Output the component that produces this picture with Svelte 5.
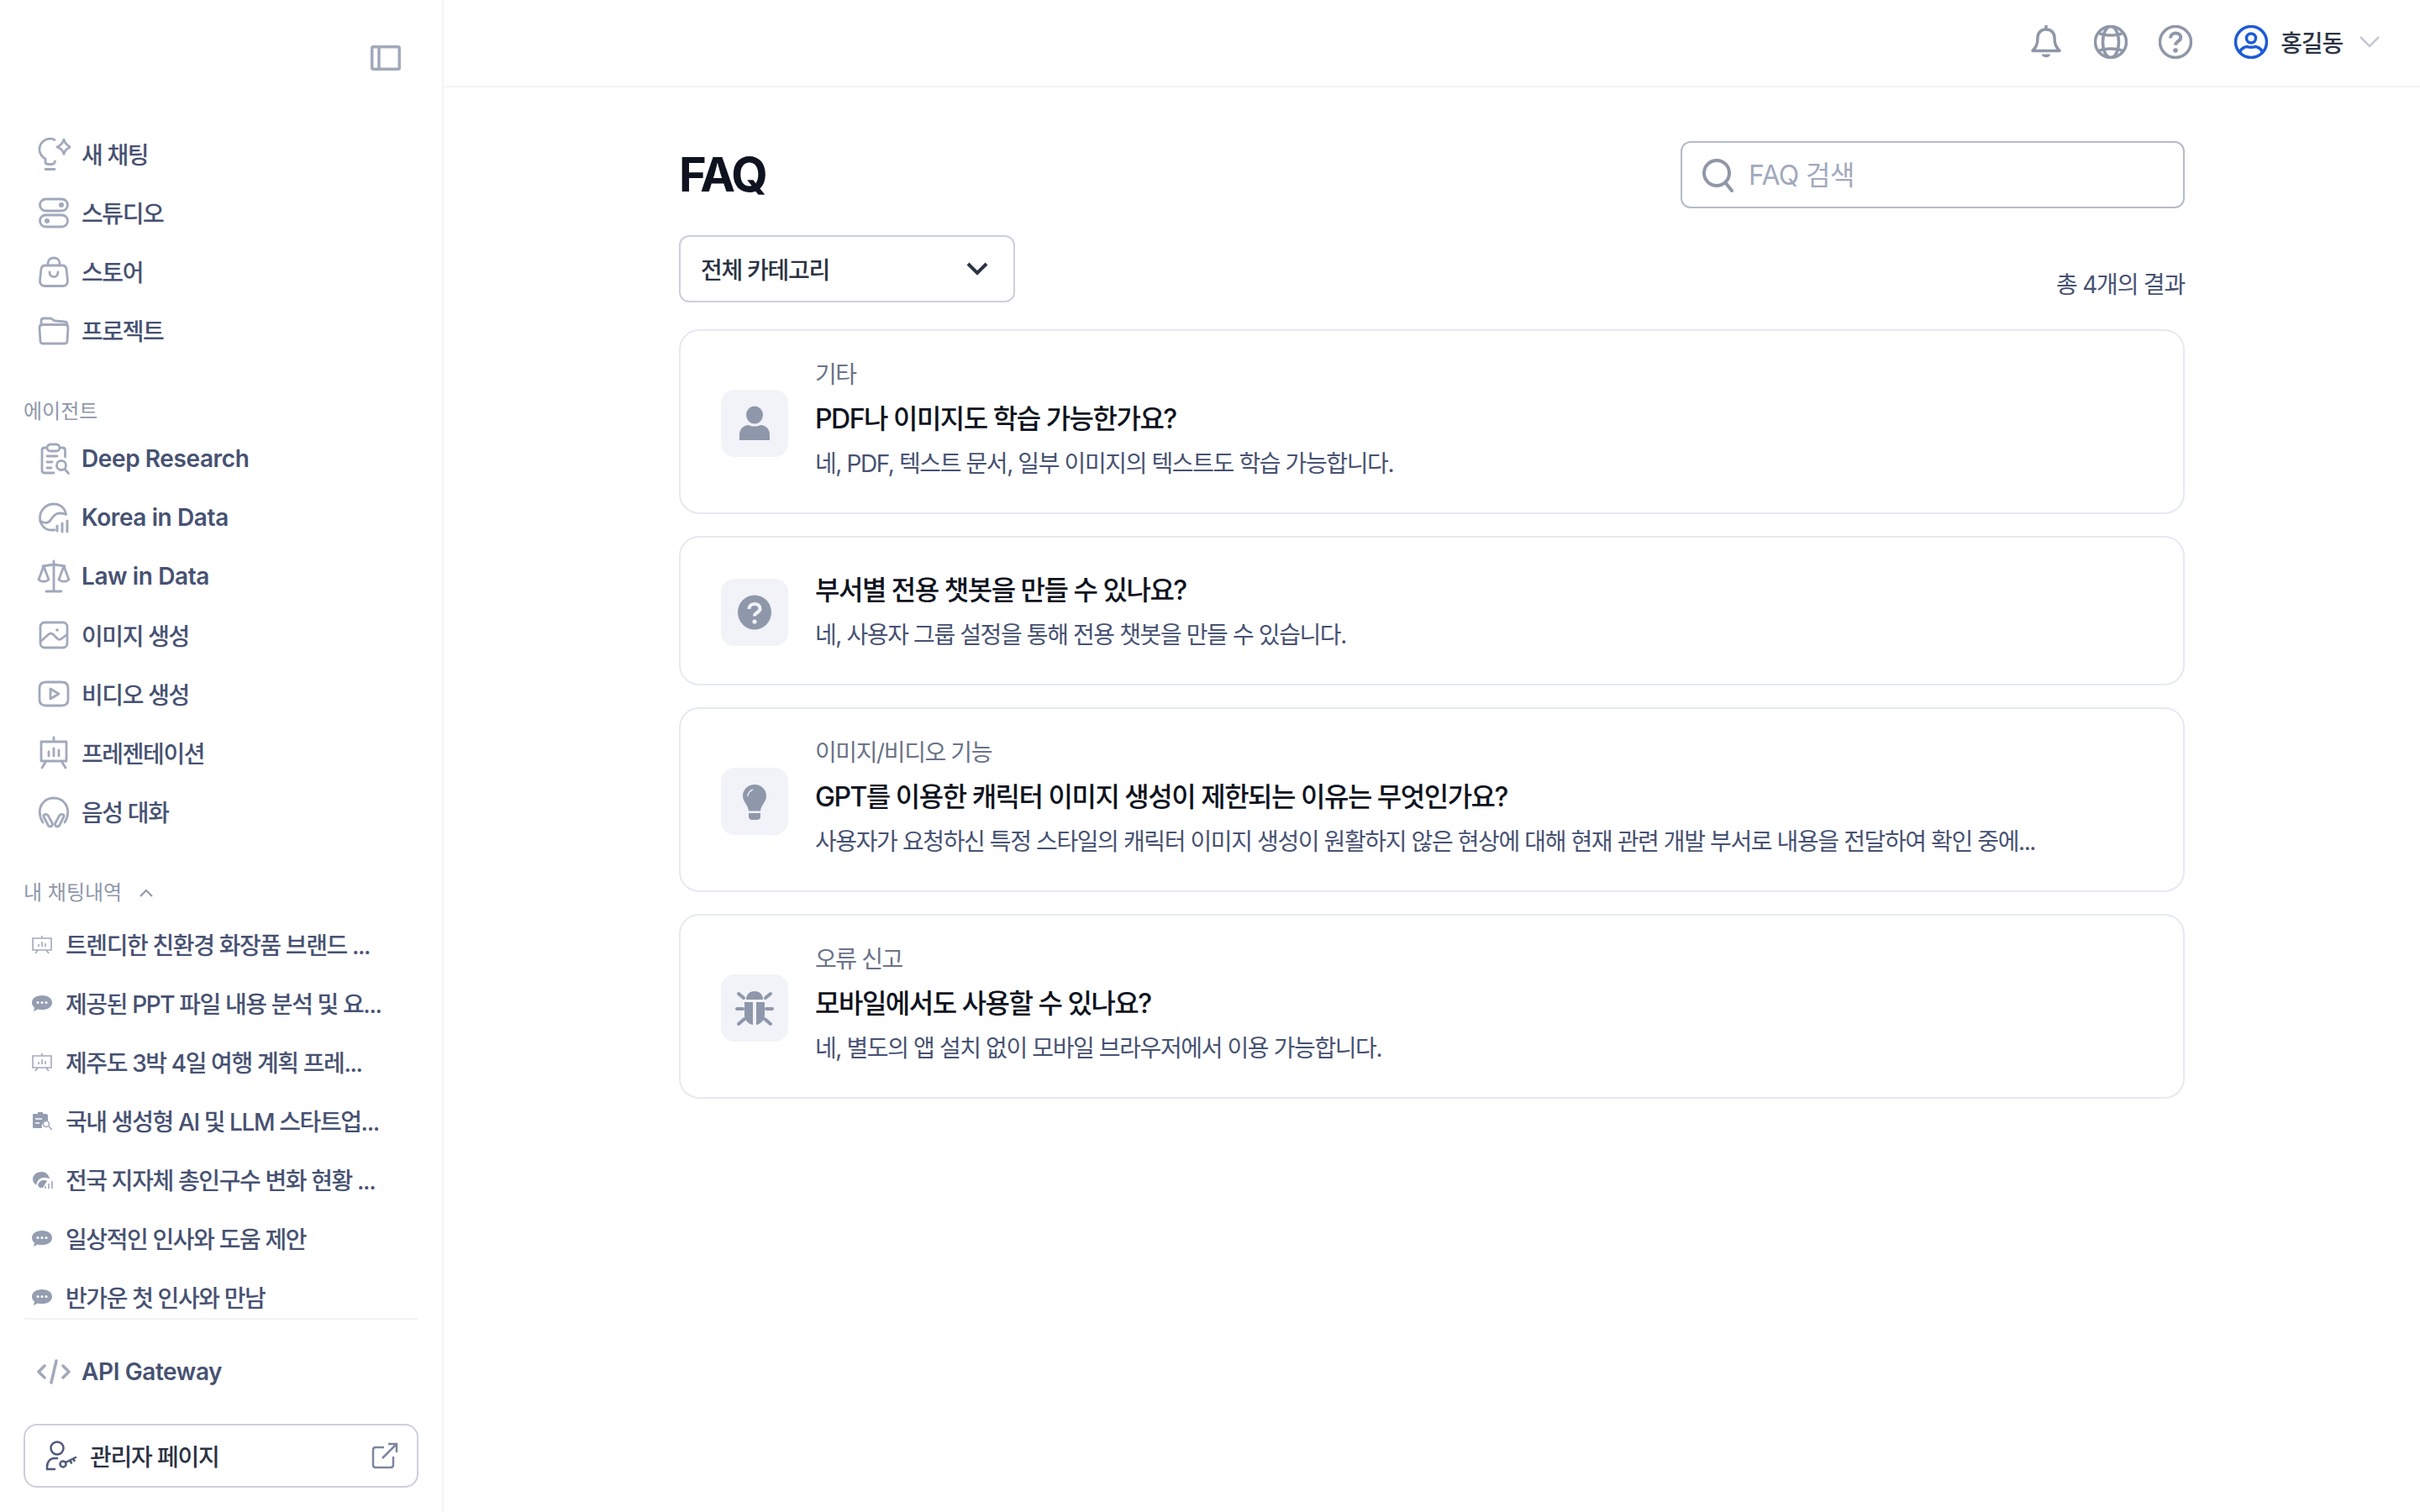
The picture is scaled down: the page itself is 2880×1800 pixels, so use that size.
<script>
  const icons = {
    bulb: '<path d="M21 3.500A12.500 12.500 0 0 0 10 26v3.500c0 2 1 3 3 3h5c2 0 3-1 3.500-3.500M10 38.500h11"/><path d="M32 3c1 4.500 3.500 7 8 9-4.500 1.500-7 4-8 8.500-1-4.500-3.500-7-8-8.500 4.500-2 7-4.500 8-9z"/>',
    studio: '<rect x="3.500" y="4" width="33" height="14" rx="7"/><rect x="3.500" y="23" width="33" height="14" rx="7"/><circle cx="29" cy="11" r="3" class="solid"/><circle cx="12" cy="30" r="3" class="solid"/>',
    bag: '<path d="M10 13h20c3 0 4.500 1.500 5 4l1.500 14c.3 4-2 6.500-6 6.500h-21c-4 0-6.300-2.500-6-6.500L5 17c.5-2.500 2-4 5-4z"/><path d="M13 13v-2.500C13 6.500 16 4 20 4s7 2.500 7 6.500V13M15 21c0 7.500 10 7.500 10 0"/>',
    folder: '<path d="M5 13V9c0-2 1-3 3-3h8c2.500 0 3 2.500 5.500 3L33 10c2 0 3 1.500 3 3.500"/><path d="M3 17c0-2.500 1.500-3.500 4-3.500h26c2.500 0 4 1 4 3.500l-1 16c-.1 2-1.500 3-3 3H7c-1.500 0-2.900-1-3-3z"/>',
    research: '<path d="M11 7H9c-2 0-3 1-3 3v24c0 2 1 3 3 3h11M29 7h1.500c2 0 3 1 3 3v8"/><rect x="12" y="3" width="15" height="8" rx="4"/><path d="M12 17h12M12 24h6M12 31h5"/><circle cx="29" cy="28" r="5.500"/><path d="M33 32.500l4.500 5"/>',
    wave: '<path d="M21 35H17C9 35 3.500 28 3.500 20.500 3.500 11 11 4 20 4c8 0 13.500 5 14.500 12.500"/><path d="M4 24c5 4 10 3 13-2 3-5 7-9 17-6"/><path d="M24 36v-6M30 37V27M36 37V24" stroke-width="3"/>',
    scale: '<path d="M20 2v36M11 38h18M7 8l13-2 13 2"/><path d="M8 8L2 24c3 3 9 3 12 0zM32 8l-6 16c3 3 9 3 12 0z"/>',
    image: '<rect x="4" y="5" width="32" height="30" rx="5"/><path d="M5 27l9-8c2-1.500 3-1.500 5 0l5 5c2 2 3 2 5 .5l6-4.500"/><circle cx="24" cy="14" r="1.800" class="solid"/>',
    video: '<path d="M11 6h18c5 0 8 2 8 7v14c0 5-3 7-8 7H11c-5 0-8-2-8-7V13c0-5 3-7 8-7z"/><path d="M16 14v12l10-6z"/>',
    slides: '<path d="M5 7h30v23H5zM20 2v5M11 30l-5 8M29 30l5 8M14 24v-5M20 24v-9M26 24v-7"/>',
    phones: '<path d="M7 33C2 25 2 16 7 10 13 2 27 2 33 10c5 6 5 15 0 23"/>' + '<path d="M8 26l5 10c1 2 3 2.500 4.500 1.500 1-1 1.500-2 .5-4l-5-9c-1.500-2-6-1-5 1.500zM32 26l-5 10c-1 2-3 2.500-4.500 1.500-1-1-1.500-2-.5-4l5-9c1.500-2 6-1 5 1.500z"/>',
    code: '<path d="M9 13L2 20l7 7M31 13l7 7-7 7M23 7l-6 26" stroke-width="3.500"/>'
  }

  const mainNav = [
    ['bulb', '새 채팅'], ['studio', '스튜디오'], ['bag', '스토어'], ['folder', '프로젝트']
  ]
  const agents = [
    ['research', 'Deep Research'], ['wave', 'Korea in Data'], ['scale', 'Law in Data'], ['image', '이미지 생성'],
    ['video', '비디오 생성'], ['slides', '프레젠테이션'], ['phones', '음성 대화']
  ]
  const chats = [
    ['slides', '트렌디한 친환경 화장품 브랜드 ...'],
    ['bubble', '제공된 PPT 파일 내용 분석 및 요...'],
    ['slides', '제주도 3박 4일 여행 계획 프레...'],
    ['clip', '국내 생성형 AI 및 LLM 스타트업...'],
    ['globe', '전국 지자체 총인구수 변화 현황 ...'],
    ['bubble', '일상적인 인사와 도움 제안'],
    ['bubble', '반가운 첫 인사와 만남']
  ]
  const faqs = [
    { icon: 'person', cat: '기타', q: 'PDF나 이미지도 학습 가능한가요?', a: '네, PDF, 텍스트 문서, 일부 이미지의 텍스트도 학습 가능합니다.' },
    { icon: 'help', cat: '', q: '부서별 전용 챗봇을 만들 수 있나요?', a: '네, 사용자 그룹 설정을 통해 전용 챗봇을 만들 수 있습니다.' },
    { icon: 'light', cat: '이미지/비디오 기능', q: 'GPT를 이용한 캐릭터 이미지 생성이 제한되는 이유는 무엇인가요?', a: '사용자가 요청하신 특정 스타일의 캐릭터 이미지 생성이 원활하지 않은 현상에 대해 현재 관련 개발 부서로 내용을 전달하여 확인 중에...' },
    { icon: 'bug', cat: '오류 신고', q: '모바일에서도 사용할 수 있나요?', a: '네, 별도의 앱 설치 없이 모바일 브라우저에서 이용 가능합니다.' }
  ]

  const isLatin = (s) => /^[A-Za-z ]+$/.test(s)
</script>

{#snippet navRow(item)}
  <a class="row" class:latin={isLatin(item[1])} href="#top">
    <svg class="ico" viewBox="0 0 40 40">{@html icons[item[0]]}</svg>
    <span>{item[1]}</span>
  </a>
{/snippet}

<div class="layout" id="top">
  <aside>
    <div class="toggle">
      <svg width="36" height="30" viewBox="0 0 36 30" fill="none" stroke="#a2a9bc" stroke-width="3.500"><rect x="1.750" y="1.750" width="32.500" height="26.500" rx="1.500"/><path d="M10 2v26" /></svg>
    </div>
    <nav class="first">
      {#each mainNav as item}{@render navRow(item)}{/each}
    </nav>
    <div class="label">에이전트</div>
    <nav>
      {#each agents as item}{@render navRow(item)}{/each}
    </nav>
    <div class="label hist">내 채팅내역
      <svg width="18" height="10" viewBox="0 0 18 10" fill="none" stroke="#8f97ab" stroke-width="2"><path d="M2 9l7-7 7 7"/></svg>
    </div>
    <div class="chats">
      {#each chats as c}
        <a class="chat" href="#top">
          <svg viewBox="0 0 26 26" class="mini">
            {#if c[0] === 'slides'}
              <path class="ol" d="M2 6h22v14H2zM13 3v3M8 20l-3 4M18 20l3 4M9 16v-3M13 16v-6M17 16v-4"/>
            {:else if c[0] === 'bubble'}
              <path d="M13 4C6 4 1 7.500 1 12.500c0 2.500 1 4.500 3 6L3 23l5-2.500c1.500.4 3.200.6 5 .6 7 0 12-3.600 12-8.600S20 4 13 4z"/>
              <circle cx="8" cy="12.500" r="1.500" fill="#fff"/><circle cx="13" cy="12.500" r="1.500" fill="#fff"/><circle cx="18" cy="12.500" r="1.500" fill="#fff"/>
            {:else if c[0] === 'clip'}
              <path d="M3 5h5V3h6v2h4c1 0 2 1 2 2v6a7 7 0 0 0-7 9H3c-1 0-1-1-1-1V6c0-1 0-1 1-1z"/>
              <path class="cut" d="M5 11h8M5 16h5"/>
              <circle class="ol" cx="18" cy="17" r="3.500"/><path class="ol" d="M21 20l4 4"/>
            {:else}
              <path d="M13 4C6 4 2 8 2 13c0 3 2 5 4 7 1-5 4-9 9-9 2 0 5 .5 7 1-1-5-5-8-9-8z"/>
              <path d="M8 20c1-4 4-6 7-6 2 0 3 .5 4 1l-5 8h-3c-1 0-2-1-3-3z"/>
              <path class="ol" d="M17 24v-3M21 24v-6M25 24v-9"/>
            {/if}
          </svg>
          <span>{c[1]}</span>
        </a>
      {/each}
    </div>
    <nav class="api">{@render navRow(['code', 'API Gateway'])}</nav>
    <a class="admin" href="#top">
      <svg width="40" height="40" viewBox="0 0 40 40" fill="none" stroke="#4f5a78" stroke-width="2.500" stroke-linecap="round"><circle cx="16" cy="11" r="7.500"/><path d="M4 36v-3c0-6 4-10 9-10h3"/><path d="M4 36h9"/><circle cx="23" cy="30" r="3.500"/><path d="M26 28l12-6M31 25.500l2 3M35 23.500l1.500 2.500"/></svg>
      <span>관리자 페이지</span>
      <svg class="ext" width="32" height="32" viewBox="0 0 32 32" fill="none" stroke="#7d869f" stroke-width="2.500"><path d="M15 6H5c-2 0-3 1-3 3v18c0 2 1 3 3 3h18c2 0 3-1 3-3V17M13 19L30 2M20 2h10v10"/></svg>
    </a>
  </aside>

  <div class="content">
    <header>
      <svg class="hi" viewBox="0 0 40 40" fill="none" stroke="#8f97a8" stroke-width="3.500" stroke-linejoin="round"><path d="M20 5c-6.500 0-10 4.500-10 10 0 8-2 11-6 15.500h32c-4-4.500-6-7.500-6-15.500 0-5.500-3.500-10-10-10z"/><path d="M20 1v4" stroke-linecap="round"/><path d="M15 34.500h10c0 5-10 5-10 0z" fill="#8f97a8" stroke="none"/></svg>
      <svg class="hi" viewBox="0 0 40 40" fill="none" stroke="#8f97a8" stroke-width="3.500"><circle cx="20" cy="20" r="18.500"/><ellipse cx="20" cy="20" rx="9.500" ry="18.500"/><path d="M5 9c8 4 22 4 30 0M5 31c8-4 22-4 30 0"/></svg>
      <svg class="hi" viewBox="0 0 40 40" fill="none" stroke="#8f97a8" stroke-width="3.500"><circle cx="20" cy="20" r="18.500"/><path d="M14 15.500c0-4 3-6 6.200-6 3.500 0 6 2 6 5.200 0 4.500-6 4.500-6 9" stroke-width="4"/><circle cx="20" cy="30" r="2.800" fill="#8f97a8" stroke="none"/></svg>
      <div class="user">
        <svg width="40" height="40" viewBox="0 0 40 40" fill="none" stroke="#1d5bd6" stroke-width="3.500"><circle cx="20" cy="20" r="18.500"/><circle cx="20" cy="15.500" r="5.500"/><path d="M6.500 32c2-5 7-6.500 9-6.500 2 1 7 1 9 0 2 0 7 1.500 9 6.500"/></svg>
        <span>홍길동</span>
        <svg width="24" height="14" viewBox="0 0 24 14" fill="none" stroke="#c4c9d4" stroke-width="2.500"><path d="M1 1l11 11L23 1"/></svg>
      </div>
    </header>

    <main>
      <div class="head">
        <h1>FAQ</h1>
        <div class="search">
          <svg width="42" height="42" viewBox="0 0 42 42" fill="none" stroke="#8f97a8" stroke-width="4" stroke-linecap="round"><circle cx="19" cy="19" r="15"/><path d="M29 30l8 10"/></svg>
          <input placeholder="FAQ 검색" />
        </div>
      </div>
      <div class="filter">
        <div class="select">
          <span>전체 카테고리</span>
          <svg width="26" height="16" viewBox="0 0 26 16" fill="none" stroke="#2b3344" stroke-width="4"><path d="M2 2l11 11L24 2"/></svg>
        </div>
        <span class="count">총 4개의 결과</span>
      </div>
      <div class="cards">
        {#each faqs as f}
          <article>
            <div class="tile">
              <svg viewBox="0 0 80 80" width="80" height="80" fill="#8f97ab">
                {#if f.icon === 'person'}
                  <ellipse cx="40" cy="30" rx="10" ry="10.500"/>
                  <path d="M22 60V53c0-7 6-11 11-11 4 2 10 2 14 0 5 0 11 4 11 11v7z"/>
                {:else if f.icon === 'help'}
                  <ellipse cx="40" cy="40" rx="20" ry="20.500"/>
                  <path d="M33.500 36c0-4 3-6 6.500-6s6.500 2 6.500 5.500c0 5-6.500 4.500-6.500 9" fill="none" stroke="#f1f3f9" stroke-width="4"/>
                  <circle cx="40" cy="51" r="2.600" fill="#f1f3f9"/>
                {:else if f.icon === 'light'}
                  <path d="M40 20c-8 0-14 6-14 13.500 0 7 6 10 7 18h14c1-8 7-11 7-18C54 26 48 20 40 20z"/>
                  <path d="M33 54h14v4c0 3-2 4-4 4h-6c-2 0-4-1-4-4z"/>
                  <path d="M32 34c0-4 3-7 6-8" fill="none" stroke="#f1f3f9" stroke-width="1.500"/>
                {:else}
                  <path d="M30 30c0-6 4-10 10-10s10 4 10 10z"/>
                  <path d="M28 33h10v27c-6-1-10-6-10-12zM42 33h10v15c0 6-4 11-10 12z"/>
                  <path d="M27 28l-6-5M53 28l6-5M26 41h-7M54 41h7M28 53l-7 6M52 53l7 6" fill="none" stroke="#8f97ab" stroke-width="4" stroke-linecap="round"/>
                {/if}
              </svg>
            </div>
            <div class="body">
              {#if f.cat}<div class="cat">{f.cat}</div>{/if}
              <h2>{f.q}</h2>
              <p>{f.a}</p>
            </div>
          </article>
        {/each}
      </div>
    </main>
  </div>
</div>

<style>
  :global(body) {
    margin: 0;
    background: #fff;
    font-family: Inter, "Noto Sans CJK KR", sans-serif;
  }
  .layout {
    display: flex;
    height: 1800px;
    overflow: hidden;
  }
  aside {
    width: 528px;
    flex: none;
    box-sizing: border-box;
    border-right: 2px solid #f3f4f9;
    padding: 0 28px 0 28px;
  }
  .toggle {
    display: flex;
    justify-content: flex-end;
    padding: 54px 21px 0 0;
    height: 94px;
    box-sizing: border-box;
  }
  .toggle svg { display: block; }
  nav.first { margin-top: 54px; }
  .row {
    display: flex;
    align-items: center;
    gap: 13px;
    height: 70px;
    padding-left: 16px;
    color: #475272;
    font-size: 28px;
    font-weight: 500;
    letter-spacing: -1.4px;
    text-decoration: none;
  }
  .row.latin {
    font-weight: 600;
    letter-spacing: -0.4px;
  }
  .ico {
    width: 40px;
    height: 40px;
    flex: none;
    fill: none;
    stroke: #a2a9bc;
    stroke-width: 2.8;
    stroke-linecap: round;
    stroke-linejoin: round;
  }
  .ico :global(.solid) { fill: #a2a9bc; stroke: none; }
  .label {
    margin: 44px 0 3px;
    height: 36px;
    line-height: 36px;
    font-size: 24px;
    color: #8f97ab;
  }
  .hist {
    margin-bottom: 8px;
    display: flex;
    align-items: center;
    gap: 20px;
  }
  .chats {
    height: 480px;
    overflow: hidden;
    border-bottom: 2px solid #f3f4f9;
  }
  .chat {
    display: flex;
    align-items: center;
    gap: 15px;
    height: 70px;
    padding-left: 9px;
    color: #475272;
    font-size: 28px;
    font-weight: 500;
    letter-spacing: -1.4px;
    white-space: nowrap;
    text-decoration: none;
  }
  .mini {
    width: 26px;
    height: 26px;
    flex: none;
    fill: #959db1;
  }
  .mini .ol {
    fill: none;
    stroke: #a2a9bc;
    stroke-width: 1.6;
  }
  .mini .cut {
    fill: none;
    stroke: #fff;
    stroke-width: 1.6;
  }
  .api { margin-top: 27px; }
  .admin {
    margin-top: 27px;
    display: flex;
    align-items: center;
    height: 76px;
    box-sizing: border-box;
    border: 2px solid #ccd0dc;
    border-radius: 16px;
    padding: 0 22px;
    color: #2b3344;
    font-size: 28px;
    font-weight: 500;
    letter-spacing: -1.2px;
    text-decoration: none;
  }
  .admin span { margin-left: 15px; flex: 1; }
  .content {
    flex: 1;
    min-width: 0;
  }
  header {
    height: 104px;
    box-sizing: border-box;
    border-bottom: 2px solid #f3f4f9;
    display: flex;
    align-items: center;
    justify-content: flex-end;
    gap: 37px;
    padding: 0 48px 2px 0;
  }
  .hi { width: 40px; height: 40px; }
  .user {
    display: flex;
    align-items: center;
    margin-left: 13px;
    font-size: 28px;
    font-weight: 500;
    letter-spacing: -1.2px;
    color: #2b3344;
  }
  .user span { margin: 0 20px 0 15px; }
  main {
    width: 1792px;
    margin: 0 auto;
    padding-top: 64px;
  }
  .head {
    display: flex;
    justify-content: space-between;
    align-items: center;
  }
  h1 {
    margin: 0;
    font-size: 56px;
    font-weight: 700;
    color: #0f1320;
    letter-spacing: -2.5px;
  }
  .search {
    width: 600px;
    height: 80px;
    box-sizing: border-box;
    border: 2px solid #b5bbc9;
    border-radius: 12px;
    display: flex;
    align-items: center;
    padding-left: 22px;
    gap: 13px;
  }
  .search input {
    border: none;
    outline: none;
    flex: 1;
    min-width: 0;
    font: inherit;
    font-size: 32px;
    letter-spacing: -0.6px;
    color: #2b3344;
  }
  .search input::placeholder { color: #a2a9bc; }
  .filter {
    margin-top: 32px;
    display: flex;
    justify-content: space-between;
    align-items: flex-end;
  }
  .select {
    width: 400px;
    height: 80px;
    box-sizing: border-box;
    border: 2px solid #ccd0dc;
    border-radius: 12px;
    display: flex;
    align-items: center;
    justify-content: space-between;
    padding: 0 30px 0 24px;
    font-size: 28px;
    font-weight: 500;
    letter-spacing: -1.3px;
    color: #2b3344;
  }
  .count {
    font-size: 28px;
    letter-spacing: -1.2px;
    color: #475272;
    padding-bottom: 3px;
  }
  .cards {
    margin-top: 32px;
    display: flex;
    flex-direction: column;
    gap: 26px;
  }
  article {
    border: 2px solid #e6e9f2;
    border-radius: 24px;
    padding: 39px 48px 36px;
    display: flex;
    align-items: center;
    gap: 32px;
  }
  .tile {
    width: 80px;
    height: 80px;
    flex: none;
    border-radius: 16px;
    background: #f1f3f9;
  }
  .tile svg { display: block; }
  .body { min-width: 0; }
  .cat {
    font-size: 28px;
    line-height: 26px;
    letter-spacing: -1.4px;
    margin-bottom: 16px;
    color: #6b7388;
  }
  h2 {
    margin: 0;
    font-size: 32px;
    line-height: 48px;
    font-weight: 500;
    letter-spacing: -1.5px;
    color: #0f1320;
  }
  p {
    margin: 7px 0 0;
    font-size: 28px;
    line-height: 44px;
    letter-spacing: -1.4px;
    color: #475272;
  }
</style>
